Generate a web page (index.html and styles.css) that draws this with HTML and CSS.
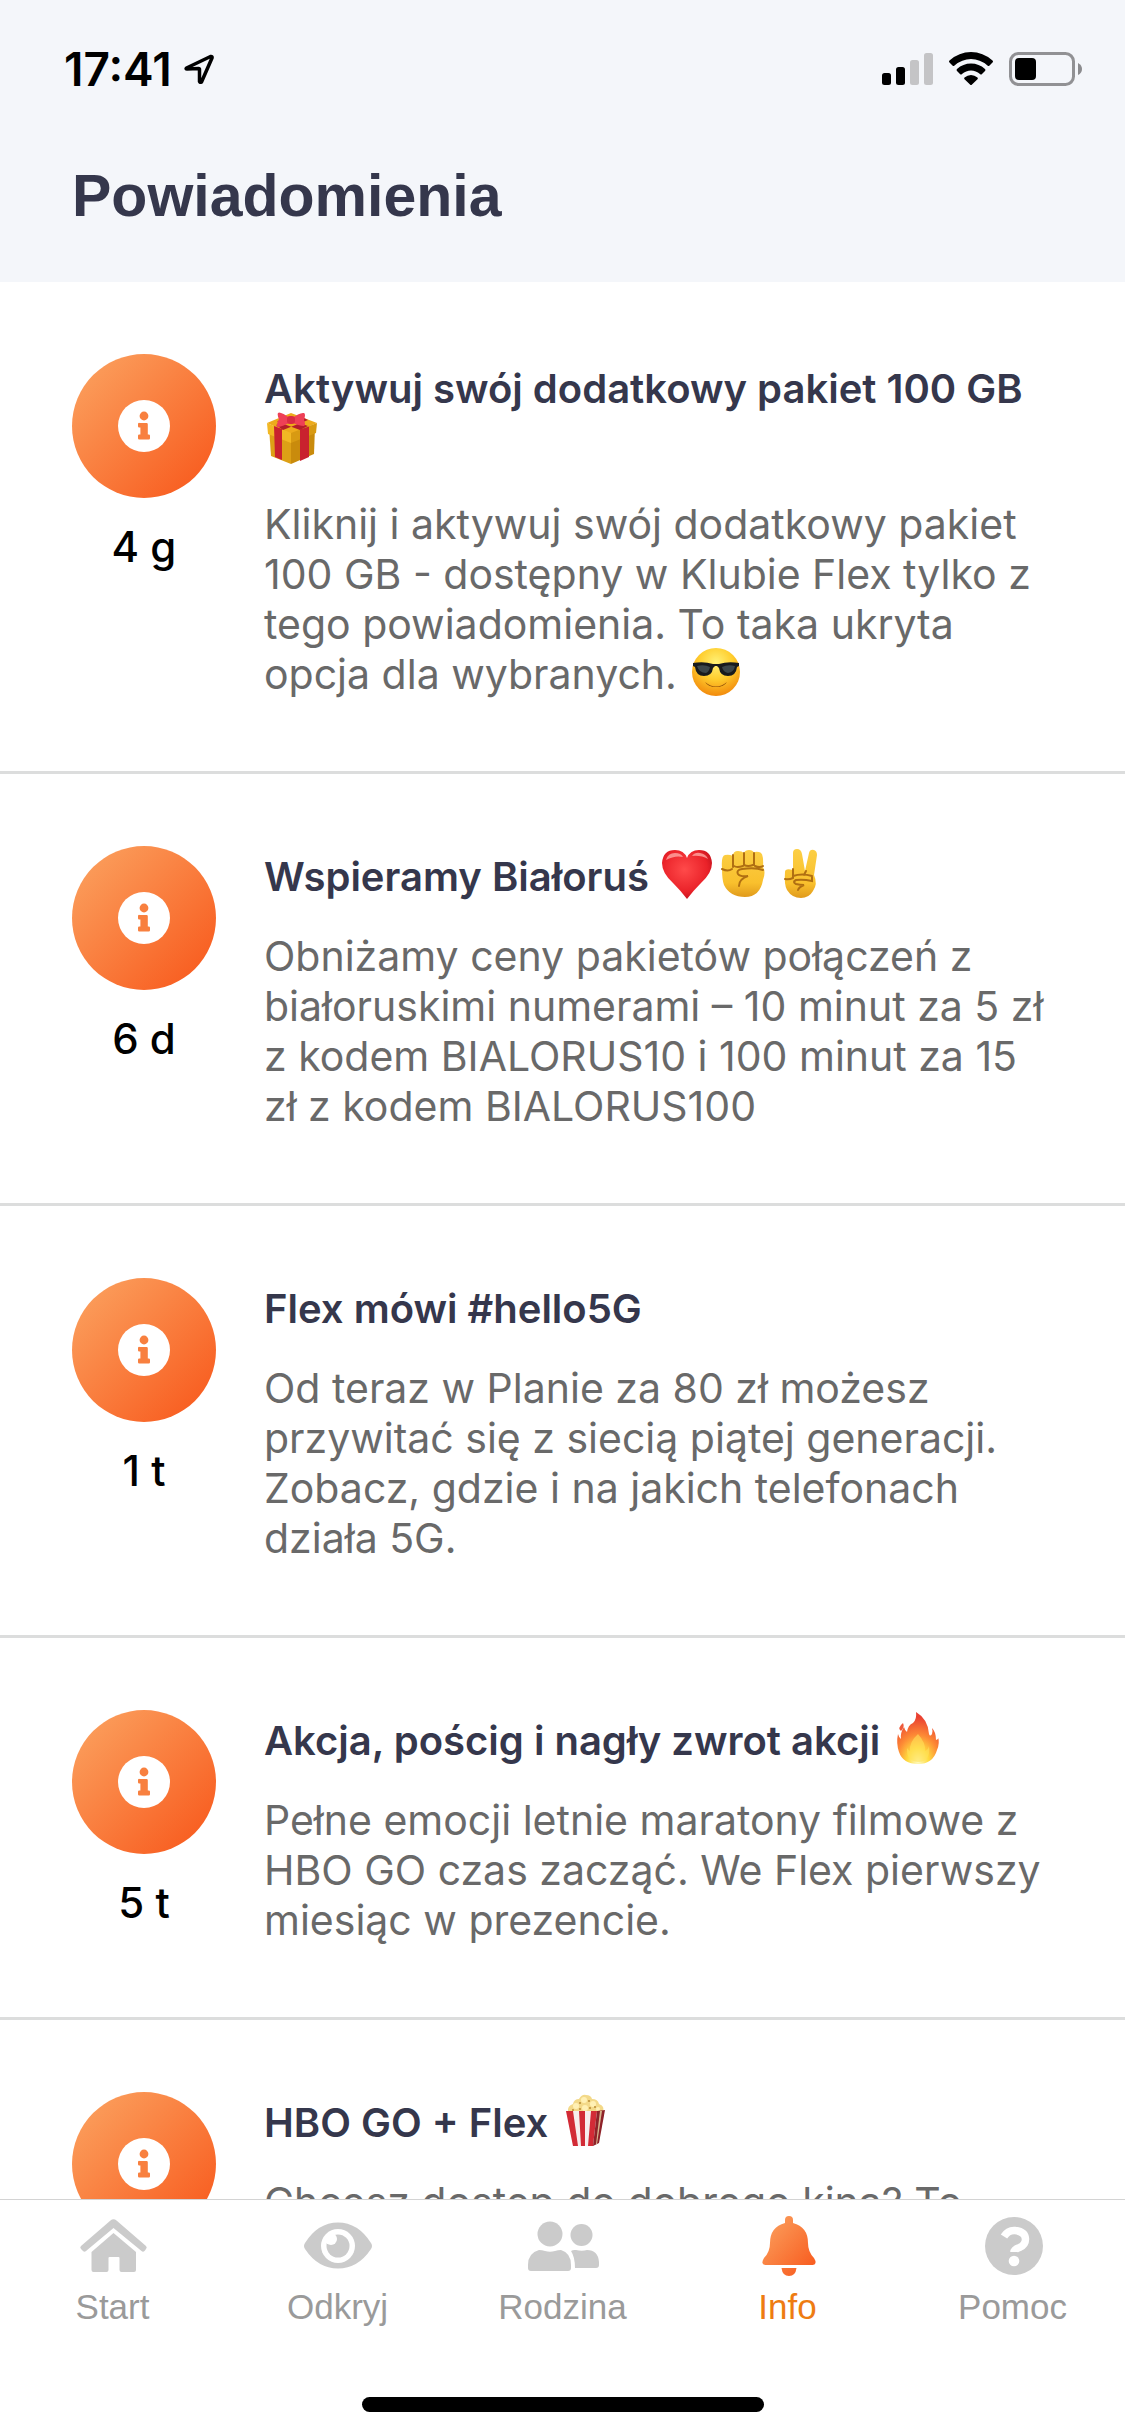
FILE: index.html
```html
<!DOCTYPE html>
<html lang="pl">
<head>
<meta charset="utf-8">
<meta name="viewport" content="width=device-width, initial-scale=1">
<title>Powiadomienia</title>
<link rel="stylesheet" href="styles.css">
</head>
<body>
<svg class="defs" aria-hidden="true">
  <defs>
    <linearGradient id="orange" x1="0" y1="0" x2="1" y2="1">
      <stop offset=".1" stop-color="#fb9d5b"/><stop offset=".9" stop-color="#f85d20"/>
    </linearGradient>
    <radialGradient id="face" cx=".5" cy=".3" r=".7">
      <stop offset="0" stop-color="#fff176"/><stop offset=".5" stop-color="#ffce2e"/><stop offset="1" stop-color="#f28a0c"/>
    </radialGradient>
    <radialGradient id="heart" cx=".45" cy=".4" r=".65">
      <stop offset="0" stop-color="#ff4a4a"/><stop offset=".7" stop-color="#ea2229"/><stop offset="1" stop-color="#bd0f1b"/>
    </radialGradient>
    <linearGradient id="skin" x1="0" y1="0" x2="0" y2="1">
      <stop offset="0" stop-color="#fccf45"/><stop offset=".7" stop-color="#f9c02d"/><stop offset="1" stop-color="#e09a1c"/>
    </linearGradient>
    <radialGradient id="fire" cx=".5" cy=".95" r=".85">
      <stop offset="0" stop-color="#fffbc0"/><stop offset=".3" stop-color="#ffdb3f"/><stop offset=".6" stop-color="#fd8a35"/><stop offset="1" stop-color="#ea4031"/>
    </radialGradient>
    <symbol id="badge" viewBox="0 0 144 144">
      <circle cx="72" cy="72" r="72" fill="url(#orange)"/>
      <circle cx="72" cy="72" r="26" fill="#fff"/>
      <g fill="#f8803f">
        <circle cx="72" cy="62" r="4.4"/>
        <path d="M67.4 69h7.2q1.200 0 1.200 1.200V80.500h1q1.200 0 1.200 1.200v2.600q0 1.200-1.200 1.200H67.200q-1.200 0-1.200-1.200v-2.600q0-1.200 1.200-1.200h1.200v-7h-1.200q-1.200 0-1.200-1.200v-2.300q0-1.200 1.400-1.200z"/>
      </g>
    </symbol>
  </defs>
</svg>

<div class="screen">
  <header class="header">
    <div class="status">
      <div class="status__group">
        <time class="status__time">17:41</time>
        <svg class="status__location" viewBox="0 0 30 30" aria-hidden="true">
          <path d="M2.500 14 26.500 2.500Q28.500 2 28 4L17.500 28q-1.500 1-2-.5V15.500q0-1-1-1L3 15q-1.500 0-.5-1z" fill="none" stroke="#000" stroke-width="3.500" stroke-linejoin="round"/>
        </svg>
      </div>
      <div class="status__group status__group--icons">
        <svg class="status__signal" viewBox="0 0 51 34" aria-hidden="true">
          <rect x="0" y="21" width="9" height="12" rx="2.500"/>
          <rect x="14" y="15" width="9" height="18" rx="2.500"/>
          <rect x="28" y="8" width="9" height="25" rx="2.500" fill="#c4c4c6"/>
          <rect x="42" y="1" width="9" height="32" rx="2.500" fill="#c4c4c6"/>
        </svg>
        <svg class="status__wifi" viewBox="0 0 44 34" aria-hidden="true">
          <path d="M22 0Q34 0 43.500 8.500q1 1 0 2l-3 3q-1 1-2 0Q31 7 22 7T5.500 13.500q-1 1-2 0l-3-3q-1-1 0-2Q10 0 22 0z"/>
          <path d="M22 11.500q8 0 14 5.500 1 1 0 2l-3 3q-1 1-2 0-4-3.500-9-3.500T13 22q-1 1-2 0l-3-3q-1-1 0-2 6-5.500 14-5.500z"/>
          <path d="M22 23q3.500 0 6.500 2.500.8 1 0 1.800L23 32.500q-1 1-2 0l-5.500-5.200q-.8-.8 0-1.800Q18.500 23 22 23z"/>
        </svg>
        <svg class="status__battery" viewBox="0 0 74 34" aria-hidden="true">
          <rect x="1.500" y="1.500" width="63" height="31" rx="8" fill="none" stroke="#919194" stroke-width="3"/>
          <rect x="6" y="6" width="21" height="22" rx="4"/>
          <path d="M69 11q4 2 4 6t-4 6z" fill="#8b8b8e"/>
        </svg>
      </div>
    </div>
    <h1 class="header__title">Powiadomienia</h1>
  </header>

  <main class="list">
    <article class="item">
      <div class="item__side">
        <svg class="item__badge" aria-hidden="true"><use href="#badge"/></svg>
        <span class="item__age">4 g</span>
      </div>
      <div class="item__content">
        <h2 class="item__title item__title--tall">Aktywuj swój dodatkowy pakiet 100 GB
          <svg class="emoji" viewBox="0 0 56 52" role="img" aria-label="prezent">
            <path d="M5 15 27 23V52L7 44z" fill="#dda016"/>
            <path d="M51 15 27 23V52L50 42z" fill="#c98b0c"/>
            <path d="M3 11 27 1 53 11 27 22z" fill="#edab1c"/>
            <path d="M3 11 27 21V31L4 22z" fill="#f2b824"/>
            <path d="M53 11 27 21V31L52 21z" fill="#d89a12"/>
            <path d="M10 14l8 3V48l-7-3zM36 17.500l9-3V45l-9 4z" fill="#c9212e"/>
            <path d="M13 9.500 22 6l22 8-8 4zM44 8 36 4 12 13l7 5z" fill="#b51d2a"/>
            <path d="M27 7Q16-1 14 1q-1 2 1 6-3 6-2 8 5 0 14-5 8 4 13 4 2-1 0-6 2-6 0-7-4-1-13 6z" fill="#ee4056"/>
            <rect x="23" y="4" width="8" height="8" rx="3" fill="#d92b43"/>
          </svg>
        </h2>
        <p class="item__text">Kliknij i aktywuj swój dodatkowy pakiet 100 GB - dostępny w Klubie Flex tylko z tego powiadomienia. To taka ukryta opcja dla wybranych.
          <svg class="emoji" viewBox="0 0 56 52" role="img" aria-label="uśmiech w okularach">
            <circle cx="28" cy="26" r="24" fill="url(#face)"/>
            <path d="M5 17q11-2 20 1h6q9-3 20-1v3l-2 1q-1 9-9 9t-9-8l-2-2h-2l-2 2q-1 8-9 8t-9-9l-2-1z" fill="#181b1d"/>
            <path d="M9 20q7-2 13 1-1 5-4 6-7 0-9-7zM34 21q6-3 13-1-1 6-7 7-5-1-6-6z" fill="#3b4649"/>
            <path d="M17 36q11 9 22 0-3 5-11 5t-11-5z" fill="#8b4b08"/>
          </svg>
        </p>
      </div>
    </article>

    <article class="item">
      <div class="item__side">
        <svg class="item__badge" aria-hidden="true"><use href="#badge"/></svg>
        <span class="item__age">6 d</span>
      </div>
      <div class="item__content">
        <h2 class="item__title">Wspieramy Białoruś
          <span class="emoji-row"><svg class="emoji" viewBox="0 0 56 52" role="img" aria-label="serce">
            <path d="M28 51Q22 43 14 35 3 25 3 15 4 2 16 2q9 0 12 8Q31 2 40 2q12 0 13 13 0 10-11 20-8 8-14 16z" fill="url(#heart)"/>
            <path d="M7 12q2-7 9-7 6 0 8 4-8-2-17 3zM33 8q3-4 8-3 6 1 8 6-7-4-16-3z" fill="#ffb0ab" opacity=".75"/>
          </svg><svg class="emoji" viewBox="0 0 56 52" role="img" aria-label="pięść">
            <path d="M7 20q-1-12 3-13 4-1 8 1 0-5 5-5 4 0 6 2 1-3 5-3t5 3q1-2 5-1 5 0 4 15 3 5 0 13-3 17-18 17Q15 49 9 37q-2-5-2-17z" fill="url(#skin)"/>
            <path d="M18 7v12M29 5v12M39 5v12M7 21q6 3 10 0M19 18q3 2 9 0M29 17q4 2 9 0M40 18q5 2 8 0M48 22q-8-3-21-1-6 1-4 5 2 3 10 2-9 3-9 10" fill="none" stroke="#b06f12" stroke-width="2" stroke-linecap="round"/>
          </svg><svg class="emoji" viewBox="0 0 56 52" role="img" aria-label="znak zwycięstwa">
            <path d="M22 22 22 5q0-4 4-4t5 5l3 17 4-18q1-4 5-3 3 1 3 5l-3 20q4 9-1 16-4 7-12 7-9 0-14-8-3-5-2-18 0-4 8-2z" fill="url(#skin)"/>
            <path d="M22 21v9q-4 2-8 1M22 28q9-3 19 0M41 29v4q-9-2-16-1-4 2 0 4 4 1 8 1-5 2-6 5M33 27l2-4" fill="none" stroke="#b06f12" stroke-width="2" stroke-linecap="round"/>
          </svg></span>
        </h2>
        <p class="item__text">Obniżamy ceny pakietów połączeń z białoruskimi numerami – 10 minut za 5 zł z kodem BIALORUS10 i 100 minut za 15 zł z kodem BIALORUS100</p>
      </div>
    </article>

    <article class="item">
      <div class="item__side">
        <svg class="item__badge" aria-hidden="true"><use href="#badge"/></svg>
        <span class="item__age">1 t</span>
      </div>
      <div class="item__content">
        <h2 class="item__title">Flex mówi #hello5G</h2>
        <p class="item__text">Od teraz w Planie za 80 zł możesz przywitać się z siecią piątej generacji. Zobacz, gdzie i na jakich telefonach działa 5G.</p>
      </div>
    </article>

    <article class="item">
      <div class="item__side">
        <svg class="item__badge" aria-hidden="true"><use href="#badge"/></svg>
        <span class="item__age">5 t</span>
      </div>
      <div class="item__content">
        <h2 class="item__title">Akcja, pościg i nagły zwrot akcji
          <svg class="emoji" viewBox="0 0 56 52" role="img" aria-label="ogień">
            <path d="M26 0q12 7 13 22 1 3 3 0 1-3 0-6 4 4 4 12 3-1 2-3 2 6-1 13-4 14-19 14Q13 52 9 40 6 31 8 22q1 4 3 5-1-6 3-12 1 4 3 5 1-7 6-9 4-4 3-11z" fill="url(#fire)"/>
            <path d="M13 11q2 4-2 8-4-3 2-8z" fill="#ee5a3b"/>
            <path d="M28 22q8 9 7 17 3-1 4-5 2 16-11 16-12-1-11-14 2 3 3 3-1-9 8-17z" fill="#ffe15a" opacity=".6"/>
          </svg>
        </h2>
        <p class="item__text">Pełne emocji letnie maratony filmowe z HBO GO czas zacząć. We Flex pierwszy miesiąc w prezencie.</p>
      </div>
    </article>

    <article class="item">
      <div class="item__side">
        <svg class="item__badge" aria-hidden="true"><use href="#badge"/></svg>
      </div>
      <div class="item__content">
        <h2 class="item__title">HBO GO + Flex
          <svg class="emoji" viewBox="0 0 56 52" role="img" aria-label="popcorn">
            <path d="M10 18q-1-6 5-8 1-5 6-5 3-5 7-4 5 0 6 4 6 0 7 5 6 2 4 8l-16 3z" fill="#f3d989"/>
            <g fill="#fff0b4"><circle cx="18" cy="12" r="3"/><circle cx="26" cy="6" r="3"/><circle cx="35" cy="10" r="3"/><circle cx="27" cy="14" r="3"/><circle cx="40" cy="15" r="2"/></g>
            <g fill="#b98a35"><circle cx="22" cy="9" r="1"/><circle cx="31" cy="7" r="1"/><circle cx="32" cy="14" r="1"/><circle cx="15" cy="16" r="1"/><circle cx="22" cy="15" r="1"/><circle cx="37" cy="13" r="1"/></g>
            <path d="M8 17H39l-4 35H15z" fill="#f6eeee"/>
            <path d="M8 17h7l5 35h-5zM21 17h6v35h-4zM33 17h6l-4 35h-5z" fill="#d22b36"/>
            <path d="M39 17 47 16 41 49 35 52z" fill="#8e2229"/>
            <path d="M42 17h2l-5 33h-1z" fill="#d6b48c"/>
          </svg>
        </h2>
        <p class="item__text">Chcesz dostęp do dobrego kina? To</p>
      </div>
    </article>
  </main>

  <footer class="dock">
    <nav class="tabs" aria-label="Menu główne">
      <a class="tab" href="#start">
        <svg class="tab__icon" viewBox="0 0 72 66" aria-hidden="true">
          <path d="M33.500 7.500Q36.500 5 39.500 7.500L69 33q1.500 1.500 0 3l-1.500 2q-1.500 1.500-3 0L36.500 15 9 38q-1.500 1.500-3 0L4 36q-1.500-1.500 0-3z"/>
          <path d="M36.500 20 59 39V57q0 2-2 2H44.500q-2 0-2-2V45q0-1-1-1h-9q-1 0-1 1V57q0 2-2 2H16.500q-2 0-2-2V39z"/>
        </svg>
        <span>Start</span>
      </a>
      <a class="tab" href="#odkryj">
        <svg class="tab__icon" viewBox="0 0 72 66" aria-hidden="true">
          <path d="M36 9.500Q56 9.500 69 30q2 3 0 6Q56 55.500 36 55.500T3 36q-2-3 0-6Q16 9.500 36 9.500z"/>
          <circle cx="36" cy="33" r="17" fill="#fff"/>
          <circle cx="36" cy="33" r="11.500"/>
          <circle cx="29" cy="26" r="6" fill="#fff"/>
        </svg>
        <span>Odkryj</span>
      </a>
      <a class="tab" href="#rodzina">
        <svg class="tab__icon" viewBox="0 0 72 66" aria-hidden="true">
          <circle cx="23" cy="21" r="12.500"/>
          <path d="M12 37q3 0 6 1 5 1.500 10 0 3-1 6-1 10 3 10 15v3q0 3-3 3H4q-3 0-3-3V52Q1 40 12 37z"/>
          <circle cx="54.500" cy="22" r="11"/>
          <path d="M44 38q2-1.500 5-1 6 1.500 11 0 11 0 12 12v3q0 3-3 3H48q0-11-4-17z"/>
        </svg>
        <span>Rodzina</span>
      </a>
      <a class="tab tab--active" href="#info" aria-current="page">
        <svg class="tab__icon" viewBox="0 0 72 66" aria-hidden="true">
          <path d="M33 10V7q0-4 4-4t4 4v3q15 4 15 20 0 9 6 15 2 3 1.500 5-.5 2-3 2H13.500q-2.500 0-3-2-.5-2 1.500-5 6-6 6-15 0-16 15-20zM29.500 55h15q-1 8-7.500 8t-7.500-8z" fill="url(#orange)"/>
        </svg>
        <span>Info</span>
      </a>
      <a class="tab" href="#pomoc">
        <svg class="tab__icon" viewBox="0 0 72 66" aria-hidden="true">
          <circle cx="37" cy="33" r="29"/>
          <path d="M27 23.500Q31 17 38 17.500q10 1 10.500 8.500 0 6-6 8.500-5.500 2-5.500 4.500" fill="none" stroke="#fff" stroke-width="7.500"/>
          <circle cx="37" cy="48" r="5.300" fill="#fff"/>
        </svg>
        <span>Pomoc</span>
      </a>
    </nav>
    <div class="home-indicator"></div>
  </footer>
</div>
</body>
</html>
```
FILE: styles.css
```css
* {
  box-sizing: border-box;
}

body {
  margin: 0;
  background: #fff;
  color: #000;
  font-family: Inter, "Liberation Sans", sans-serif;
}

h1,
h2,
p {
  margin: 0;
}

.defs {
  position: absolute;
  width: 0;
  height: 0;
}

.screen {
  display: flex;
  flex-direction: column;
  height: 100vh;
}

/* Header */
.header {
  flex: none;
  padding-bottom: 50px;
  background: #f4f6fa;
}

.status {
  display: flex;
  align-items: center;
  justify-content: space-between;
  height: 138px;
  padding: 0 42px 0 64px;
}

.status__group {
  display: flex;
  align-items: center;
  gap: 12px;
}

.status__group--icons {
  gap: 16px;
}

.status__time {
  font-size: 46px;
  font-weight: 600;
  line-height: 50px;
}

.status__location {
  width: 30px;
  height: 30px;
}

.status__signal {
  width: 51px;
  height: 34px;
}

.status__wifi {
  width: 44px;
  height: 34px;
}

.status__battery {
  width: 74px;
  height: 34px;
}

.header__title {
  margin-top: 22px;
  padding: 0 72px;
  color: #35374c;
  font-family: "Liberation Sans", sans-serif;
  font-size: 59px;
  font-weight: 700;
  line-height: 72px;
}

/* Notifications */
.list {
  flex: 1;
  min-height: 0;
  overflow-y: auto;
  scrollbar-width: none;
}

.item {
  display: grid;
  grid-template-columns: 144px 1fr;
  column-gap: 48px;
  padding: 72px;
  border-bottom: 3px solid #dcdddd;
}

.item__side {
  display: flex;
  flex-direction: column;
  align-items: center;
  gap: 24px;
}

.item__badge {
  width: 144px;
  height: 144px;
}

.item__age {
  font-size: 42px;
  font-weight: 500;
  line-height: 50px;
}

.item__content {
  padding-top: 6px;
}

.item__title {
  margin-bottom: 29px;
  color: #35374c;
  font-size: 40px;
  font-weight: 600;
  line-height: 50px;
}

.item__title--tall {
  padding: 3px 0;
  line-height: 52px;
}

.item__text {
  color: #696969;
  font-size: 41px;
  line-height: 50px;
}

.emoji {
  width: 56px;
  height: 52px;
  margin: -14px 0 -2px;
  vertical-align: middle;
}

.emoji-row {
  white-space: nowrap;
}

/* Bottom bar */
.dock {
  flex: none;
  padding: 13px 0 24px;
  border-top: 1px solid #d4d4d4;
  background: #fff;
}

.tabs {
  display: grid;
  grid-template-columns: repeat(5, 1fr);
}

.tab {
  display: flex;
  flex-direction: column;
  align-items: center;
  gap: 6px;
  color: #9a9a9a;
  font-family: "Liberation Sans", sans-serif;
  font-size: 35px;
  line-height: 44px;
  text-decoration: none;
}

.tab--active {
  color: #ee7c12;
}

.tab__icon {
  width: 72px;
  height: 66px;
  overflow: visible;
  fill: #cbcbcb;
}

.home-indicator {
  width: 402px;
  height: 15px;
  margin: 68px auto 0;
  border-radius: 8px;
  background: #000;
}
```
